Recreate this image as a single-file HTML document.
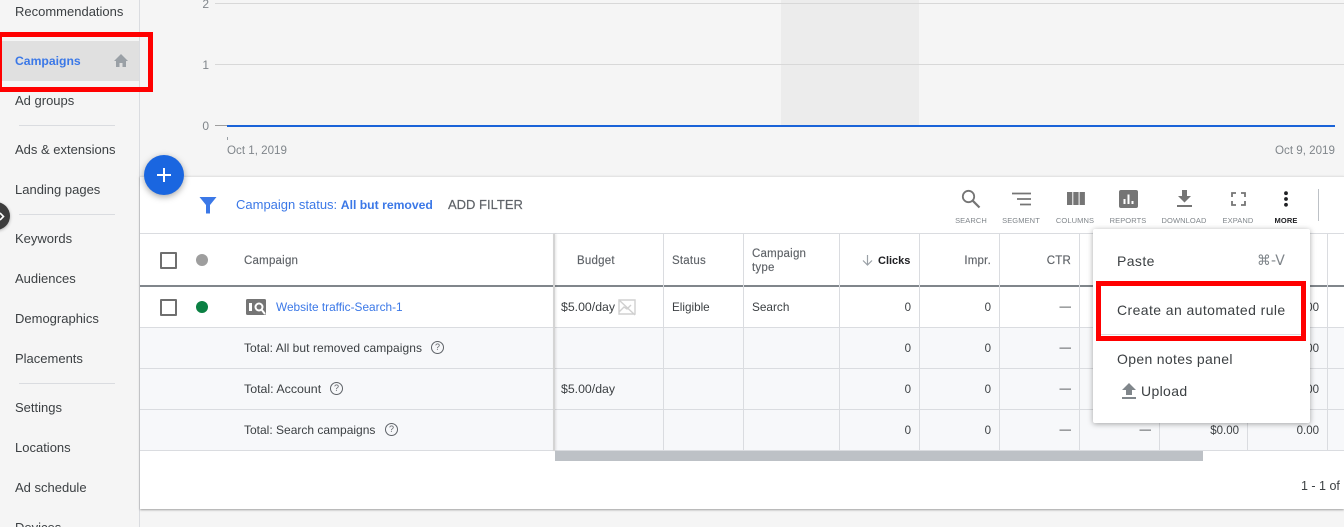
<!DOCTYPE html>
<html><head><meta charset="utf-8"><style>
html,body{margin:0;padding:0;width:1344px;height:527px;overflow:hidden}
body{background:#f5f5f5;font-family:"Liberation Sans","Noto Sans CJK JP",sans-serif;color:#3c4043;white-space:nowrap}
#w{position:relative;width:1344px;height:527px;overflow:hidden;background:#f5f5f5}
.a{position:absolute;white-space:nowrap}
.n{position:absolute;left:15px;font-size:13px;line-height:16px;color:#3c4043}
.hr{position:absolute;left:19px;width:96px;height:1px;background:#dadce0}
.gl{position:absolute;left:215px;right:0;height:1px;background:#d8d8d8}
.yl{position:absolute;width:20px;text-align:right;left:189px;font-size:12px;line-height:14px;color:#80868b}
.vl{position:absolute;width:1px;top:234px;height:217px;background:#dadce0}
.hl{position:absolute;left:140px;right:0;height:1px;background:#dadce0}
.tot{position:absolute;left:140px;right:0;height:40px;background:#f7f8fa}
.h{position:absolute;font-size:11.5px;line-height:15px;color:#5f6368;font-weight:400;letter-spacing:.22px;-webkit-text-stroke:.15px #5f6368}
.c{position:absolute;font-size:12px;line-height:14px;color:#3c4043}
.r{text-align:right;width:60px;font-size:11.5px}
.tl{position:absolute;top:216px;font-size:7.5px;line-height:10px;color:#80868b;text-align:center;width:60px;letter-spacing:.1px}
.q{position:absolute;width:11px;height:11px;border:1.4px solid #5f6368;border-radius:50%;font-size:9px;line-height:11px;text-align:center;color:#5f6368}
.cb{position:absolute;left:160px;width:13px;height:13px;border:2px solid #6f6f6f;border-radius:1px;background:#fff}
.m{position:absolute;font-size:14px;line-height:18px;color:#3c4043;letter-spacing:.2px;white-space:nowrap}
</style></head><body><div id="w">

<!-- sidebar -->
<div style="position:absolute;left:139px;top:0;width:1px;height:527px;background:#dadce0"></div>
<div style="position:absolute;left:0;top:41px;width:139px;height:40px;background:#e0e0e0"></div>
<div class="n" style="top:4px">Recommendations</div>
<div class="n" style="top:53px;color:#3b78e7;font-weight:700;font-size:12.2px">Campaigns</div>
<svg class="a" style="left:113px;top:53px" width="16" height="15" viewBox="0 0 16 15"><path d="M8 1L1 8h2v6h3.5v-4h3v4H13V8h2z" fill="#9aa0a6"/></svg>
<div class="n" style="top:93px">Ad groups</div>
<div class="hr" style="top:125px"></div>
<div class="n" style="top:142px">Ads &amp; extensions</div>
<div class="n" style="top:182px">Landing pages</div>
<div class="hr" style="top:214px"></div>
<div class="n" style="top:231px">Keywords</div>
<div class="n" style="top:271px">Audiences</div>
<div class="n" style="top:311px">Demographics</div>
<div class="n" style="top:351px">Placements</div>
<div class="hr" style="top:383px"></div>
<div class="n" style="top:400px">Settings</div>
<div class="n" style="top:440px">Locations</div>
<div class="n" style="top:480px">Ad schedule</div>
<div class="n" style="top:520px">Devices</div>
<div style="position:absolute;left:-18px;top:202px;width:28px;height:28px;border-radius:14px;background:#3c3c3c;box-shadow:0 1px 3px rgba(0,0,0,.3)"></div>
<svg class="a" style="left:0;top:212px" width="5" height="9" viewBox="0 0 5 9"><path d="M0 1l3.500 3.500L0 8" fill="none" stroke="#fff" stroke-width="1.600"/></svg>

<!-- red box -->
<div style="position:absolute;left:-3px;top:32px;width:156px;height:60px;box-sizing:border-box;border:5px solid #f00;z-index:5"></div>

<!-- chart -->
<div style="position:absolute;left:781px;top:0;width:138px;height:126px;background:#ececec"></div>
<div class="yl" style="top:-3px">2</div>
<div class="yl" style="top:58px">1</div>
<div class="yl" style="top:119px">0</div>
<div class="gl" style="top:3px"></div>
<div class="gl" style="top:64px"></div>
<div class="gl" style="top:125px;background:#9e9e9e;width:12px;right:auto"></div>
<div style="position:absolute;left:227px;right:9px;top:125px;height:2px;background:#1a63d8"></div>
<div class="a" style="left:227px;top:137px;width:1px;height:3px;background:#9aa0a6"></div>
<div class="a" style="left:227px;top:144px;font-size:11.6px;line-height:14px;color:#80868b">Oct 1, 2019</div>
<div class="a" style="left:1275px;top:144px;font-size:11.6px;line-height:14px;color:#80868b">Oct 9, 2019</div>

<!-- card -->
<div style="position:absolute;left:140px;top:176px;width:1204px;height:333px;background:#fff;box-shadow:0 1px 2px rgba(0,0,0,.35);border-top:1px solid #e4e4e4;box-sizing:border-box"></div>

<!-- FAB -->
<div style="position:absolute;left:144px;top:155px;width:40px;height:40px;border-radius:50%;background:#1a66e0;box-shadow:0 2px 7px rgba(0,0,0,.35);z-index:3"></div>
<svg class="a" style="left:157px;top:168px;z-index:4" width="14" height="14" viewBox="0 0 14 14"><path d="M7 0v14M0 7h14" stroke="#fff" stroke-width="2"/></svg>

<!-- toolbar -->
<svg class="a" style="left:199px;top:197px" width="18" height="17" viewBox="0 0 18 17"><path d="M0.500 0h17L11 8v8.500H7V8z" fill="#3b78e7"/></svg>
<div class="a" style="left:236px;top:197px;font-size:13px;line-height:16px;color:#3b78e7">Campaign status: <b style="font-size:12.2px">All but removed</b></div>
<div class="a" style="left:448px;top:197px;font-size:13px;line-height:16px;color:#5f6368;-webkit-text-stroke:.2px #5f6368">ADD FILTER</div>

<svg class="a" style="left:961px;top:189px" width="20" height="20" viewBox="0 0 20 20"><circle cx="7.500" cy="7.500" r="5.700" fill="none" stroke="#757575" stroke-width="1.800"/><path d="M11.700 11.700L18.500 18.500" stroke="#757575" stroke-width="2.200"/></svg>
<svg class="a" style="left:1012px;top:192px" width="20" height="14" viewBox="0 0 20 14"><path d="M0 1.500h19M5 7h14M8 12.500h11" stroke="#757575" stroke-width="1.700"/></svg>
<svg class="a" style="left:1067px;top:192px" width="18" height="13" viewBox="0 0 18 13"><path d="M0 0h5.300v13H0zM6.300 0h5.300v13H6.300zM12.600 0h5.300v13h-5.300z" fill="#757575"/></svg>
<svg class="a" style="left:1119px;top:190px" width="19" height="18" viewBox="0 0 19 18"><rect width="19" height="18" rx="2" fill="#757575"/><path d="M4.500 9h2v5h-2zM8.500 4.500h2V14h-2zM12.500 11h2v3h-2z" fill="#fff"/></svg>
<svg class="a" style="left:1177px;top:190px" width="15" height="17" viewBox="0 0 15 17"><path d="M5 0h5v6h4L7.500 12.500 1 6h4zM0 15h15v2H0z" fill="#757575"/></svg>
<svg class="a" style="left:1231px;top:192px" width="15" height="14" viewBox="0 0 15 14"><path d="M1 5V1h4M10 1h4v4M14 9v4h-4M5 13H1V9" fill="none" stroke="#757575" stroke-width="1.800"/></svg>
<svg class="a" style="left:1283px;top:191px" width="6" height="16" viewBox="0 0 6 16"><circle cx="3" cy="2.200" r="1.900" fill="#202124"/><circle cx="3" cy="8" r="1.900" fill="#202124"/><circle cx="3" cy="13.800" r="1.900" fill="#202124"/></svg>
<div class="tl" style="left:941px">SEARCH</div>
<div class="tl" style="left:991px">SEGMENT</div>
<div class="tl" style="left:1045px">COLUMNS</div>
<div class="tl" style="left:1098px">REPORTS</div>
<div class="tl" style="left:1154px">DOWNLOAD</div>
<div class="tl" style="left:1208px">EXPAND</div>
<div class="tl" style="left:1256px;color:#202124;font-weight:700">MORE</div>
<div class="a" style="left:1318px;top:189px;width:1px;height:32px;background:#bdc1c6"></div>

<!-- table -->
<div class="tot" style="top:328px"></div>
<div class="tot" style="top:369px"></div>
<div class="tot" style="top:410px"></div>
<div class="hl" style="top:233px"></div>
<div class="hl" style="top:285px;height:2px;background:#80868b"></div>
<div class="hl" style="top:327px"></div>
<div class="hl" style="top:368px"></div>
<div class="hl" style="top:409px"></div>
<div class="hl" style="top:450px"></div>
<div class="vl" style="left:553px;width:2px;background:#d4d4d4;box-shadow:1px 0 2px rgba(0,0,0,.12)"></div>
<div class="vl" style="left:663px"></div>
<div class="vl" style="left:743px"></div>
<div class="vl" style="left:839px"></div>
<div class="vl" style="left:919px"></div>
<div class="vl" style="left:999px"></div>
<div class="vl" style="left:1079px"></div>
<div class="vl" style="left:1159px"></div>
<div class="vl" style="left:1247px"></div>
<div class="vl" style="left:1327px"></div>
<div class="a" style="left:555px;top:451px;width:648px;height:10px;background:#bdc1c6"></div>

<div class="cb" style="top:252px"></div>
<div class="a" style="left:196px;top:254px;width:12px;height:12px;border-radius:50%;background:#9e9e9e"></div>
<div class="h" style="left:244px;top:254px">Campaign</div>
<div class="h" style="left:577px;top:254px">Budget</div>
<div class="h" style="left:672px;top:254px">Status</div>
<div class="h" style="left:752px;top:247px;line-height:14px">Campaign<br>type</div>
<svg class="a" style="left:862px;top:255px" width="11" height="11" viewBox="0 0 11 11"><path d="M5.500 0v10M1 5.500l4.500 4.500L10 5.500" fill="none" stroke="#9aa0a6" stroke-width="1.200"/></svg>
<div class="h" style="left:878px;top:254px;color:#202124;font-weight:700;letter-spacing:0;font-size:11px;-webkit-text-stroke:0">Clicks</div>
<div class="h" style="left:931px;top:254px;width:60px;text-align:right">Impr.</div>
<div class="h" style="left:1011px;top:254px;width:60px;text-align:right">CTR</div>

<div class="cb" style="top:299px"></div>
<div class="a" style="left:196px;top:301px;width:12px;height:12px;border-radius:50%;background:#0b8043"></div>
<svg class="a" style="left:246px;top:299px" width="20" height="16" viewBox="0 0 20 16"><rect width="20" height="16" rx="1.500" fill="#757575"/><rect x="3" y="4" width="3" height="8" fill="#fff"/><circle cx="13" cy="8" r="4.500" fill="#fff"/><circle cx="13" cy="8" r="2.500" fill="#757575"/><path d="M15.500 10.500L19 15" stroke="#fff" stroke-width="2"/></svg>
<div class="c" style="left:276px;top:300px;color:#3b78e7;font-size:11.85px">Website traffic-Search-1</div>
<div class="c" style="left:561px;top:300px;font-size:12.3px">$5.00/day</div>
<svg class="a" style="left:618px;top:298px" width="18" height="18" viewBox="0 0 18 18"><path d="M1 2h16v14H1zM1 2l16 15M1 14l5-5 3 2 4-4" fill="none" stroke="#d0d0d0" stroke-width="1.400"/></svg>
<div class="c" style="left:672px;top:301px;font-size:11.7px">Eligible</div>
<div class="c" style="left:752px;top:300px;font-size:11.8px">Search</div>

<div class="c" style="left:244px;top:341px;letter-spacing:.06px">Total: All but removed campaigns</div>
<div class="q" style="left:431px;top:341px">?</div>
<div class="c" style="left:244px;top:382px;font-size:12.4px">Total: Account</div>
<div class="c" style="left:561px;top:382px;font-size:12.3px">$5.00/day</div>
<div class="q" style="left:330px;top:382px">?</div>
<div class="c" style="left:244px;top:423px">Total: Search campaigns</div>
<div class="q" style="left:385px;top:423px">?</div>

<div class="c r" style="left:851px;top:301px">0</div><div class="c r" style="left:931px;top:301px">0</div><div class="c r" style="left:1011px;top:300px">—</div>
<div class="c r" style="left:851px;top:342px">0</div><div class="c r" style="left:931px;top:342px">0</div><div class="c r" style="left:1011px;top:341px">—</div>
<div class="c r" style="left:851px;top:383px">0</div><div class="c r" style="left:931px;top:383px">0</div><div class="c r" style="left:1011px;top:382px">—</div>
<div class="c r" style="left:851px;top:424px">0</div><div class="c r" style="left:931px;top:424px">0</div><div class="c r" style="left:1011px;top:423px">—</div>
<div class="c r" style="left:1091px;top:423px">—</div>
<div class="c r" style="left:1179px;top:424px">$0.00</div>
<div class="c r" style="left:1259px;top:424px">0.00</div>
<div class="c r" style="left:1259px;top:301px">0.00</div>
<div class="c r" style="left:1259px;top:342px">0.00</div>
<div class="c r" style="left:1259px;top:383px">0.00</div>
<div class="a" style="left:1301px;top:478px;font-size:12.5px;line-height:16px;color:#3c4043">1 - 1 of</div>

<!-- menu -->
<div style="position:absolute;left:1093px;top:229px;width:217px;height:194px;background:#fff;border-radius:2px;box-shadow:0 1px 6px rgba(0,0,0,.35);z-index:6"></div>
<div class="m" style="left:1117px;top:252px;z-index:7;letter-spacing:.4px">Paste</div>
<div class="m" style="left:1257px;top:252px;z-index:7;color:#80868b;letter-spacing:0;font-family:'DejaVu Sans','Liberation Sans',sans-serif;font-size:14px">⌘-V</div>
<div class="m" style="left:1117px;top:301px;z-index:7;letter-spacing:.41px">Create an automated rule</div>
<div class="a" style="left:1101px;top:334px;width:200px;height:1px;background:#dadce0;z-index:7"></div>
<div class="m" style="left:1117px;top:350px;z-index:7;letter-spacing:.33px">Open notes panel</div>
<svg class="a" style="left:1122px;top:383px;z-index:7" width="14" height="16" viewBox="0 0 14 16"><path d="M7 0l7 7h-4v5H4V7H0zM0 14h14v2H0z" fill="#80868b"/></svg>
<div class="m" style="left:1141px;top:382px;z-index:7;letter-spacing:.35px">Upload</div>
<div style="position:absolute;left:1096px;top:281px;width:210px;height:60px;box-sizing:border-box;border:5px solid #f00;z-index:8"></div>
</div></body></html>
